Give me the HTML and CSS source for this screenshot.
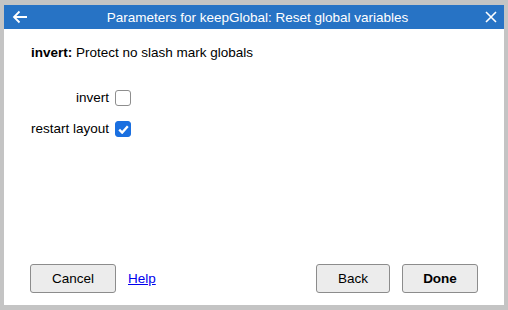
FILE: index.html
```html
<!DOCTYPE html>
<html>
<head>
<meta charset="utf-8">
<link rel="stylesheet" href="styles.css">
</head>
<body>
<div class="dialog">
  <div class="titlebar">
    <svg class="icon back" width="16" height="14" viewBox="0 0 16 14"><path d="M15 7H2M7.5 1.5L2 7l5.5 5.5" fill="none" stroke="#fff" stroke-width="1.8"/></svg>
    <div class="title">Parameters for keepGlobal: Reset global variables</div>
    <svg class="icon close" width="12" height="12" viewBox="0 0 12 12"><path d="M1 1l10 10M11 1L1 11" fill="none" stroke="#fff" stroke-width="1.6"/></svg>
  </div>
  <div class="content">
    <p class="desc"><b>invert:</b> Protect no slash mark globals</p>
    <div class="form">
      <label class="lbl">invert</label>
      <span class="cb"></span>
      <label class="lbl">restart layout</label>
      <span class="cb checked"><svg width="11" height="9" viewBox="0 0 11 9"><path d="M1.2 4.6l3 3L9.8 1.3" fill="none" stroke="#fff" stroke-width="2.3"/></svg></span>
    </div>
    <div class="spacer"></div>
    <div class="buttons">
      <button class="btn cancel">Cancel</button>
      <a class="help" href="#">Help</a>
      <div class="grow"></div>
      <button class="btn back-btn">Back</button>
      <button class="btn done">Done</button>
    </div>
  </div>
</div>
</body>
</html>
```
FILE: styles.css
```css
html, body { margin: 0; padding: 0; }
body {
  background: #c4c4c4;
  width: 508px;
  height: 310px;
  padding: 5px 4px;
  box-sizing: border-box;
  font-family: "Liberation Sans", Arial, sans-serif;
  font-size: 13.5px;
  color: #000;
}
.dialog {
  background: #fff;
  height: 300px;
  display: flex;
  flex-direction: column;
}
.titlebar {
  height: 24px;
  background: #2773c5;
  display: flex;
  align-items: center;
  padding: 0 7px 0 8px;
  color: #fff;
}
.icon { flex: none; }
.title {
  flex: 1;
  text-align: center;
  font-size: 13.5px;
  padding-left: 2px;
}
.content {
  flex: 1;
  display: flex;
  flex-direction: column;
  padding: 0 26px 12px 27px;
}
.desc {
  margin: 16px 0 0 0;
  line-height: 15px;
}
.form {
  margin-top: 30px;
  display: grid;
  grid-template-columns: max-content auto;
  column-gap: 6px;
  row-gap: 15px;
  align-items: center;
  justify-items: start;
}
.lbl { justify-self: end; line-height: 16px; }
.cb {
  width: 14px;
  height: 14px;
  border: 1px solid #8e8e8e;
  border-radius: 3px;
  background: #fff;
  display: flex;
  align-items: center;
  justify-content: center;
}
.cb.checked {
  background: #1a6fe0;
  border-color: #1a6fe0;
}
.spacer { flex: 1; }
.buttons {
  display: flex;
  align-items: center;
}
.btn {
  font-family: "Liberation Sans", Arial, sans-serif;
  font-size: 13.5px;
  height: 29px;
  background: #ececec;
  border: 1px solid #8c8c8c;
  border-radius: 3px;
  padding: 0;
  color: #000;
}
.cancel { width: 86px; margin-left: -1px; }
.help {
  margin-left: 12px;
  color: #0000ee;
  text-decoration: underline;
}
.grow { flex: 1; }
.back-btn { width: 74px; }
.done { width: 76px; margin-left: 12px; font-weight: bold; }
```
